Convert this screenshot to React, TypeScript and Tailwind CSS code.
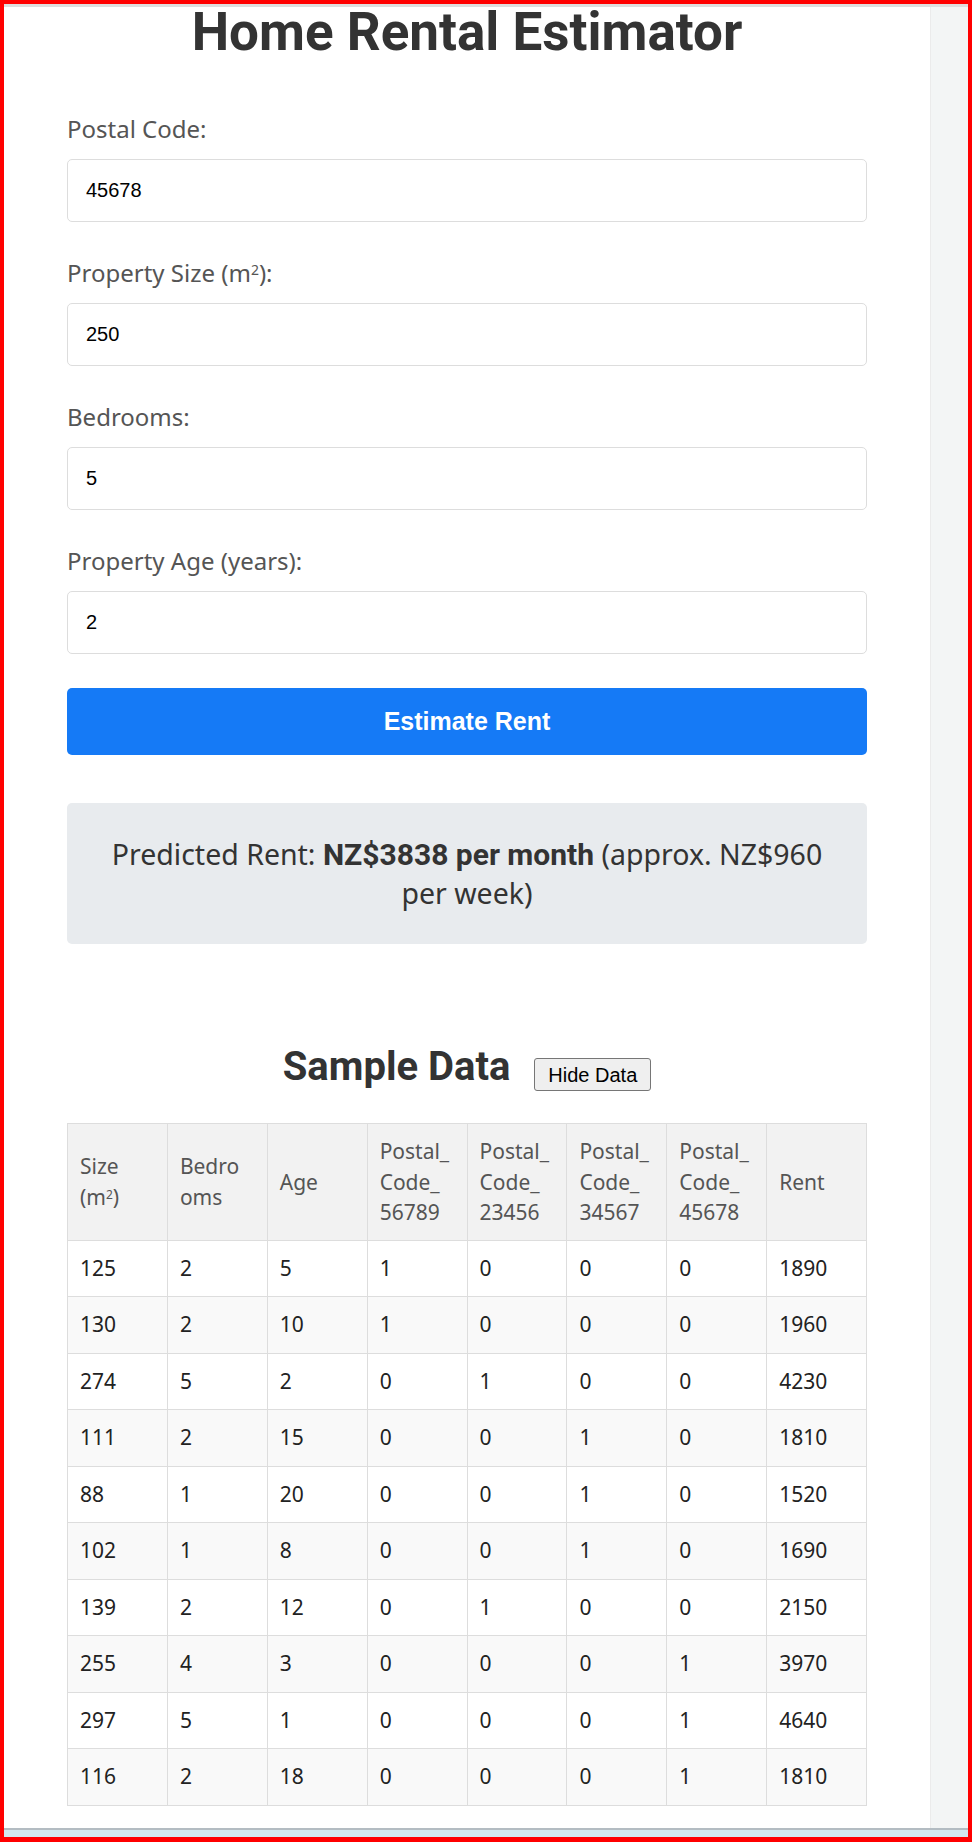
import React from 'react'

const body = "font-['Noto_Sans',sans-serif]"
const heading = "font-['Roboto',sans-serif]"
const arial = "font-['Liberation_Sans',Arial,sans-serif]"

const rows = [
  [125, 2, 5, 1, 0, 0, 0, 1890],
  [130, 2, 10, 1, 0, 0, 0, 1960],
  [274, 5, 2, 0, 1, 0, 0, 4230],
  [111, 2, 15, 0, 0, 1, 0, 1810],
  [88, 1, 20, 0, 0, 1, 0, 1520],
  [102, 1, 8, 0, 0, 1, 0, 1690],
  [139, 2, 12, 0, 1, 0, 0, 2150],
  [255, 4, 3, 0, 0, 0, 1, 3970],
  [297, 5, 1, 0, 0, 0, 1, 4640],
  [116, 2, 18, 0, 0, 0, 1, 1810],
]

const fields = [
  { label: <>Postal Code:</>, value: '45678' },
  { label: <>Property Size (m<sup className="text-[14px]">2</sup>):</>, value: '250' },
  { label: <>Bedrooms:</>, value: '5' },
  { label: <>Property Age (years):</>, value: '2' },
]

const th = 'border border-[#dddddd] px-[12px] py-[12px] leading-[30.5px] font-normal'

export default function App() {
  return (
    <div className="bg-white">
      <div className="flex h-[1842px] flex-col border-4 border-b-[5px] border-[#ff0000]">
        <div className="h-[3px] bg-[#dedede]" />
        <div className="flex flex-1">
          <main className={`w-[926px] bg-white ${body}`}>
            <div className="mx-auto w-[800px]">
              <h1 className={`h-[106px] text-center text-[53px] leading-[50px] font-bold text-[#333] ${heading}`}>
                Home Rental Estimator
              </h1>

              {fields.map((f, i) => (
                <div key={i} className="h-[144px]">
                  <label className="mb-[14px] block h-[32px] text-[24px] leading-[32px] text-[#555]">
                    {f.label}
                  </label>
                  <input
                    readOnly
                    value={f.value}
                    className={`block h-[63px] w-full rounded-[5px] border border-[#dddddd] pl-[18px] text-[20px] text-black outline-none ${arial}`}
                  />
                </div>
              ))}

              <button
                className={`mt-[-1px] block h-[67px] w-full rounded-[5px] bg-[#157af6] text-[25px] font-bold text-white ${arial}`}
              >
                Estimate Rent
              </button>

              <div className="mt-[48px] rounded-[5px] bg-[#e8ebee] px-[20px] py-[32px] text-center text-[28.5px] leading-[38px] whitespace-nowrap text-[#333]">
                Predicted Rent: <strong className={`text-[30px] font-bold ${heading}`}>NZ$3838 per month</strong> (approx.
                NZ$960
                <br />
                per week)
              </div>

              <div className="mt-[97px] flex items-start justify-center gap-[24px]">
                <h2 className={`text-[40px] leading-[52px] font-bold text-[#333] ${heading}`}>Sample Data</h2>
                <button
                  className={`mt-[17px] h-[33px] rounded-[3px] border border-[#767676] bg-[#efefef] px-[13px] text-[20px] leading-none text-black ${arial}`}
                >
                  Hide Data
                </button>
              </div>

              <table className="mt-[30px] w-full table-fixed border-collapse text-[21px]">
                <thead>
                  <tr className="bg-[#f2f2f2] text-left text-[#555]">
                    <th className={th}>
                      Size
                      <br />
                      (m<sup className="text-[12px]">2</sup>)
                    </th>
                    <th className={th}>
                      Bedro
                      <br />
                      oms
                    </th>
                    <th className={th}>Age</th>
                    {['56789', '23456', '34567', '45678'].map(c => (
                      <th key={c} className={th}>
                        Postal_
                        <br />
                        Code_
                        <br />
                        {c}
                      </th>
                    ))}
                    <th className={th}>Rent</th>
                  </tr>
                </thead>
                <tbody>
                  {rows.map((r, i) => (
                    <tr key={i} className={i % 2 === 1 ? 'bg-[#f9f9f9]' : 'bg-white'}>
                      {r.map((v, j) => (
                        <td key={j} className="h-[56.5px] border border-[#dddddd] px-[12px] py-0 text-[#222]">
                          {v}
                        </td>
                      ))}
                    </tr>
                  ))}
                </tbody>
              </table>
            </div>
          </main>
          <div className="flex-1 border-l border-[#ebebeb] bg-[#f3f5f5]" />
        </div>
        <div className="h-[9px] border-t-2 border-[#b3bcc2] bg-[#d3e8ee]" />
      </div>
    </div>
  )
}
